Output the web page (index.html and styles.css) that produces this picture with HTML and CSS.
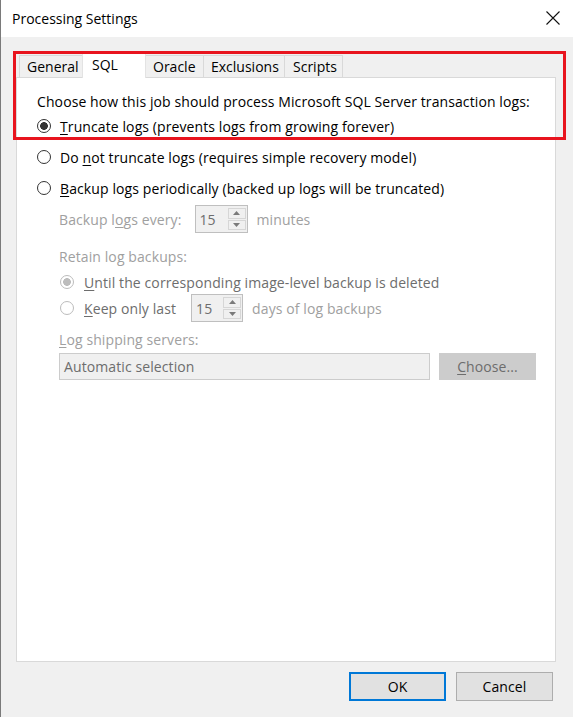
FILE: index.html
```html
<!DOCTYPE html>
<html>
<head>
<meta charset="utf-8">
<link rel="stylesheet" href="styles.css">
</head>
<body>
<div class="window">
  <div class="titlebar">
    <span class="title">Processing Settings</span>
    <svg class="close" width="14" height="14" viewBox="0 0 14 14"><path d="M0.5 0.5 L13.5 13.5 M13.5 0.5 L0.5 13.5" stroke="#111" stroke-width="1.1" fill="none"/></svg>
  </div>
  <div class="content">
    <div class="tabs">
      <div class="tab t-general">General</div>
      <div class="tab t-sql active">SQL</div>
      <div class="tab t-oracle">Oracle</div>
      <div class="tab t-excl">Exclusions</div>
      <div class="tab t-scripts">Scripts</div>
    </div>
    <div class="panel">
      <div class="row r-intro">Choose how this job should process Microsoft SQL Server transaction logs:</div>
      <div class="row r-1"><span class="radio checked"></span><span class="lbl"><u>T</u>runcate logs (prevents logs from growing forever)</span></div>
      <div class="row r-2"><span class="radio"></span><span class="lbl">Do <u>n</u>ot truncate logs (requires simple recovery model)</span></div>
      <div class="row r-3"><span class="radio"></span><span class="lbl"><u>B</u>ackup logs periodically (backed up logs will be truncated)</span></div>
      <div class="row r-every sub">
        <span class="dis">Backup l<u>o</u>gs every:</span>
        <span class="spin s-every">
          <span class="spin-val">15</span>
          <span class="spin-btns">
            <span class="sb"><svg width="7" height="4" viewBox="0 0 7 4"><path d="M0 4 L3.5 0 L7 4Z" fill="#7a7a7a"/></svg></span>
            <span class="sb"><svg width="7" height="4" viewBox="0 0 7 4"><path d="M0 0 L3.5 4 L7 0Z" fill="#7a7a7a"/></svg></span>
          </span>
        </span>
        <span class="dis">minutes</span>
      </div>
      <div class="row r-retain sub"><span class="dis">Retain log backups:</span></div>
      <div class="row r-until sub2"><span class="radio disabled checked"></span><span class="lbl dis2"><u>U</u>ntil the corresponding image-level backup is deleted</span></div>
      <div class="row r-keep sub2">
        <span class="radio disabled"></span><span class="lbl dis2"><u>K</u>eep only last</span>
        <span class="spin s-keep">
          <span class="spin-val">15</span>
          <span class="spin-btns">
            <span class="sb"><svg width="7" height="4" viewBox="0 0 7 4"><path d="M0 4 L3.5 0 L7 4Z" fill="#7a7a7a"/></svg></span>
            <span class="sb"><svg width="7" height="4" viewBox="0 0 7 4"><path d="M0 0 L3.5 4 L7 0Z" fill="#7a7a7a"/></svg></span>
          </span>
        </span>
        <span class="dis">days of log backups</span>
      </div>
      <div class="row r-ship sub"><span class="dis"><u>L</u>og shipping servers:</span></div>
      <div class="row r-box sub">
        <div class="textbox">Automatic selection</div>
        <div class="btn-choose"><u>C</u>hoose...</div>
      </div>
    </div>
  </div>
  <div class="footer">
    <div class="btn btn-ok">OK</div>
    <div class="btn btn-cancel">Cancel</div>
  </div>
  <div class="highlight"></div>
</div>
</body>
</html>
```

FILE: styles.css
```css
* { box-sizing: border-box; }
html, body { margin: 0; padding: 0; }
body {
  width: 573px;
  height: 717px;
  overflow: hidden;
  font-family: "Open Sans", "Noto Sans", sans-serif;
  font-size: 14px;
  letter-spacing: 0.1px;
  color: #000;
  background: #f0f0f0;
}
.window {
  position: relative;
  width: 573px;
  height: 717px;
  display: flex;
  flex-direction: column;
  border-left: 1px solid #7a7a7a;
  background: #f0f0f0;
}
.titlebar {
  height: 37px;
  flex: none;
  background: #fff;
  display: flex;
  align-items: center;
  justify-content: space-between;
  padding: 0 13px 1px 11px;
}
.title { font-size: 14px; color: #000; letter-spacing: 0; }
.close { display: block; margin-top: -1px; }

.content {
  flex: 1;
  display: flex;
  flex-direction: column;
  padding: 14px 17px 0 15px;
}
.tabs {
  display: flex;
  align-items: flex-end;
  height: 26px;
  padding-left: 3px;
  flex: none;
  letter-spacing: 0;
}
.tab {
  height: 22px;
  border: 1px solid #d9d9d9;
  border-bottom: none;
  background: #f0f0f0;
  display: flex;
  align-items: center;
  padding: 0 0 1px 7px;
  margin-left: -1px;
}
.t-general { width: 64px; margin-left: 0; }
.t-sql { width: 64px; padding-left: 9px; }
.t-oracle { width: 59px; }
.t-excl { width: 82px; }
.t-scripts { width: 59px; padding-left: 8px; }
.tab.active {
  height: 27px;
  background: #fff;
  margin-bottom: -1px;
  position: relative;
  z-index: 1;
  align-items: flex-start;
  padding-top: 3px;
  border-color: #e3e3e3;
}
.panel {
  flex: 1;
  background: #fff;
  border: 1px solid #d9d9d9;
  padding: 12px 10px 0 20px;
  display: flex;
  flex-direction: column;
}
.row {
  display: flex;
  align-items: center;
  height: 22px;
  white-space: nowrap;
  flex: none;
}
.r-1 { margin-top: 3px; }
.r-2 { margin-top: 9px; }
.r-3 { margin-top: 9px; }
.r-every { margin-top: 5px; height: 30px; }
.r-retain { margin-top: 11px; }
.r-until { margin-top: 4px; }
.r-keep { margin-top: 1px; height: 28px; }
.r-ship { margin-top: 6px; }
.r-box { margin-top: 3px; height: 27px; }
.sub { padding-left: 22px; }
.sub2 { padding-left: 23px; }

.radio {
  width: 14px;
  height: 14px;
  border-radius: 50%;
  border: 1px solid #333;
  background: #fff;
  flex: none;
  margin-right: 9px;
}
.radio.checked {
  background: radial-gradient(circle, #333 0, #333 3.6px, #fff 4.1px);
}
.radio.disabled { border-color: #bcbcbc; }
.radio.disabled.checked {
  background: radial-gradient(circle, #bcbcbc 0, #bcbcbc 3.6px, #fff 4.1px);
}
.sub2 .radio { margin-right: 10px; }
u { text-decoration: underline; text-underline-offset: 2px; }
.dis { color: #a0a0a0; }
.dis2 { color: #6d6d6d; }

.spin {
  display: flex;
  height: 28px;
  border: 1px solid #bfbfbf;
  background: #f0f0f0;
  padding: 2px 1px 2px 0;
}
.s-every { width: 53px; margin: 0 9px 0 13px; }
.s-keep { width: 52px; margin: 0 9px 0 15px; }
.spin-val {
  flex: 1;
  color: #6d6d6d;
  padding-left: 4px;
  display: flex;
  align-items: center;
}
.spin-btns {
  width: 18px;
  display: flex;
  flex-direction: column;
  gap: 1px;
}
.sb {
  flex: 1;
  border: 1px solid #d6d6d6;
  background: #f0f0f0;
  display: flex;
  align-items: center;
  justify-content: center;
}
.sb svg { display: block; }

.textbox {
  width: 371px;
  height: 27px;
  border: 1px solid #cccccc;
  background: #f0f0f0;
  color: #6d6d6d;
  padding-left: 4px;
  display: flex;
  align-items: center;
}
.btn-choose {
  width: 97px;
  height: 27px;
  margin-left: 9px;
  background: #cccccc;
  border: 1px solid #cccccc;
  color: #6d6d6d;
  display: flex;
  align-items: center;
  justify-content: center;
}

.footer {
  height: 55px;
  flex: none;
  display: flex;
  justify-content: flex-end;
  align-items: flex-start;
  padding: 10px 20px 0 0;
  gap: 10px;
}
.btn {
  width: 97px;
  height: 29px;
  background: #e1e1e1;
  border: 1px solid #adadad;
  display: flex;
  align-items: center;
  justify-content: center;
}
.btn-ok { border: 2px solid #0078d7; }

.highlight {
  position: absolute;
  left: 12px;
  top: 51px;
  width: 553px;
  height: 89px;
  border: 3px solid #e8141e;
  pointer-events: none;
  z-index: 5;
}
```
